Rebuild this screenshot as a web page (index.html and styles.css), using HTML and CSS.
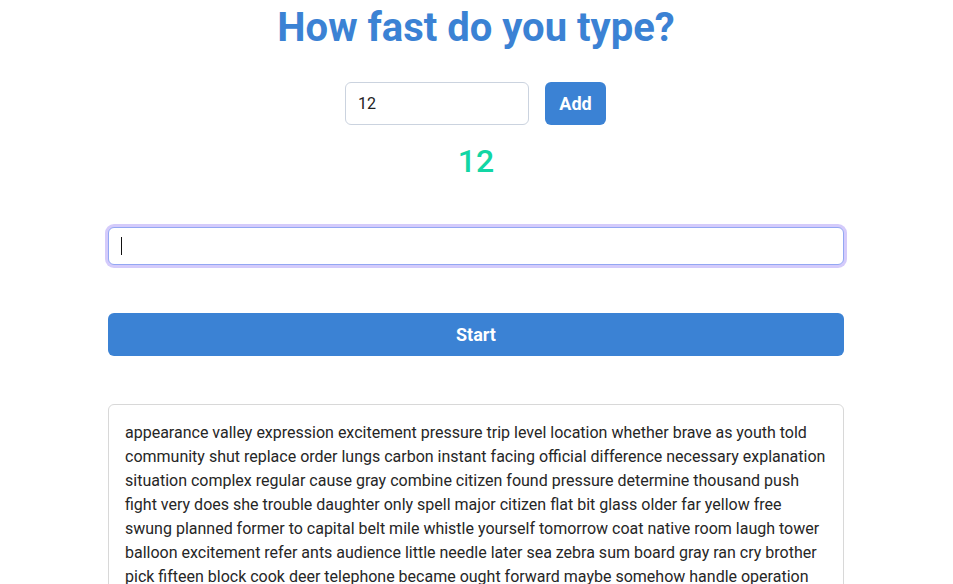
FILE: index.html
```html
<!DOCTYPE html>
<html lang="en">
<head>
<meta charset="utf-8">
<title>How fast do you type?</title>
<link rel="stylesheet" href="styles.css">
</head>
<body>
<main class="app">
  <h1 class="title">How fast do you type?</h1>
  <div class="add-row">
    <input class="num-input" type="text" value="12">
    <button class="btn add-btn">Add</button>
  </div>
  <div class="count">12</div>
  <div class="type-wrap">
    <input class="type-input" type="text">
    <span class="caret"></span>
  </div>
  <button class="btn start-btn">Start</button>
  <div class="words">appearance valley expression excitement pressure trip level location whether brave as youth told community shut replace order lungs carbon instant facing official difference necessary explanation situation complex regular cause gray combine citizen found pressure determine thousand push fight very does she trouble daughter only spell major citizen flat bit glass older far yellow free swung planned former to capital belt mile whistle yourself tomorrow coat native room laugh tower balloon excitement refer ants audience little needle later sea zebra sum board gray ran cry brother pick fifteen block cook deer telephone became ought forward maybe somehow handle operation river nearly stood shore magnet hidden silver track thick solution blow wool effort mixture during whom</div>
</main>
</body>
</html>
```

FILE: styles.css
```css
* { box-sizing: border-box; }
html, body {
  margin: 0;
  padding: 0;
  background: #ffffff;
  font-family: Roboto, "Liberation Sans", sans-serif;
  color: #1f1f1f;
}
body {
  padding-right: 1px;
}
.app {
  width: 736px;
  margin: 0 auto;
  display: flex;
  flex-direction: column;
  align-items: center;
}
.title {
  margin: 0;
  padding-top: 4px;
  font-size: 40px;
  line-height: 48px;
  font-weight: 700;
  color: #3b82d4;
}
.add-row {
  margin-top: 30px;
  display: flex;
  gap: 16px;
  padding-right: 1px;
}
.num-input {
  width: 184px;
  height: 43px;
  border: 1px solid #cbd3df;
  border-radius: 6px;
  padding: 0 12px;
  font: 400 16px Roboto, sans-serif;
  color: #222;
  outline: none;
}
.btn {
  border: none;
  border-radius: 6px;
  background: #3b82d4;
  color: #fff;
  font: 700 18px Roboto, sans-serif;
  cursor: pointer;
}
.add-btn {
  width: 61px;
  height: 43px;
}
.count {
  margin-top: 16px;
  font-size: 32px;
  line-height: 40px;
  font-weight: 500;
  color: #12d6a4;
}
.type-wrap {
  position: relative;
  margin-top: 46px;
  width: 100%;
  display: flex;
}
.type-input {
  width: 100%;
  height: 38px;
  border: 1px solid #93a7f3;
  border-radius: 6px;
  box-shadow: 0 0 0 3px #d4cbfb;
  padding: 0 12px;
  font: 400 16px Roboto, sans-serif;
  color: #222;
  outline: none;
  caret-color: #111;
}
.caret {
  position: absolute;
  left: 13px;
  top: 10px;
  width: 1px;
  height: 18px;
  background: #111;
  pointer-events: none;
}
.start-btn {
  margin-top: 48px;
  width: 100%;
  height: 43px;
}
.words {
  margin-top: 48px;
  width: 100%;
  border: 1px solid #d8d8d8;
  border-radius: 6px;
  padding: 16px;
  font-size: 16px;
  line-height: 24px;
  color: #262626;
}
```
